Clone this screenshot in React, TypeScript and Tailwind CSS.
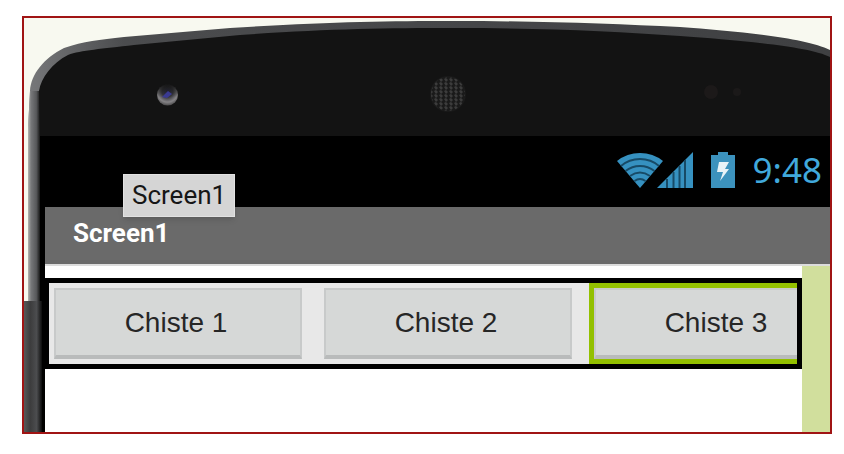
const jokes = ["Chiste 1", "Chiste 2", "Chiste 3"];

function PhoneCase() {
  return (
    <svg
      className="absolute inset-0 h-full w-full"
      viewBox="0 0 806 414"
      preserveAspectRatio="none"
      aria-hidden="true"
    >
      <defs>
        <linearGradient id="rim" x1="0" x2="1" y1="0" y2="0">
          <stop offset="0" stopColor="#77787a" />
          <stop offset="0.12" stopColor="#4b4c4e" />
          <stop offset="1" stopColor="#3f4042" />
        </linearGradient>
        <linearGradient id="side" x1="0" x2="1" y1="0" y2="0">
          <stop offset="0" stopColor="#b5b6b2" />
          <stop offset="0.25" stopColor="#77787a" />
          <stop offset="0.7" stopColor="#57585a" />
          <stop offset="1" stopColor="#161616" />
        </linearGradient>
        <linearGradient id="key" x1="0" x2="1" y1="0" y2="0">
          <stop offset="0" stopColor="#585858" />
          <stop offset="0.35" stopColor="#3c3c3d" />
          <stop offset="0.7" stopColor="#4c4d4f" />
          <stop offset="1" stopColor="#0c0c0c" />
        </linearGradient>
        <radialGradient id="lens" cx="0.5" cy="0.35" r="0.65">
          <stop offset="0" stopColor="#2b2b48" />
          <stop offset="0.4" stopColor="#3a3a40" />
          <stop offset="0.75" stopColor="#858386" />
          <stop offset="1" stopColor="#4c4b4c" />
        </radialGradient>
        <linearGradient id="lensShade" x1="0" x2="0" y1="0" y2="1">
          <stop offset="0" stopColor="#131313" />
          <stop offset="0.6" stopColor="#131313" stopOpacity="0" />
        </linearGradient>
        <pattern id="mesh" width="5" height="4" patternUnits="userSpaceOnUse">
          <path d="M0 1 2 0 4 2 2 4z" fill="#3c3c3c" />
        </pattern>
      </defs>
      <path
        d="M4 414V110L6 73C7 56 20 40 40 30C60 23 75 22 100 19L206 10C300 4 360 3 430 3C520 3 590 6 656 9C710 13 780 19 806 32V414Z"
        fill="url(#rim)"
      />
      <path
        d="M15 414V73C17 60 28 45 44 37C57 32 78 31 110 27L216 17C300 11 360 10 430 10C520 10 590 13 656 18C710 22 785 28 806 39V414Z"
        fill="#131313"
      />
      <path d="M4 110 6 73H15L16 118V414H4Z" fill="url(#side)" />
      <path d="M16 118H806V414H16Z" fill="#000" />
      <path d="M0 283H18V414H0Z" fill="url(#key)" />
      <circle cx="143.500" cy="77" r="10.500" fill="url(#lens)" />
      <circle cx="143.500" cy="77" r="11" fill="url(#lensShade)" />
      <path d="M138 79 144 73 148 76 143 80Z" fill="#3a3a92" />
      <circle cx="424" cy="76" r="18" fill="#1a1a1a" />
      <circle cx="424" cy="76" r="17" fill="url(#mesh)" />
      <circle cx="687" cy="74" r="7" fill="#1c1919" />
      <circle cx="713" cy="74" r="4" fill="#1b1919" />
    </svg>
  );
}

function WifiIcon() {
  return (
    <svg width="46" height="36" viewBox="0 0 46 36" aria-label="Wi-Fi">
      <path d="M0 9Q10 1 23 1Q36 1 46 9L23 36Z" fill="#3691c0" />
      <g fill="none" stroke="#174a66" strokeWidth="2">
        <path d="M4 14Q12 7 23 7Q34 7 42 14" />
        <path d="M8.500 19Q15 14 23 14Q31 14 37.500 19" />
        <path d="M13 24Q18 20.500 23 20.500Q28 20.500 33 24" />
        <path d="M17.500 29Q23 25 28.500 29" />
      </g>
    </svg>
  );
}

function SignalIcon() {
  return (
    <svg width="36" height="36" viewBox="0 0 36 36" aria-label="Signal">
      <path d="M0 36 36 0V36Z" fill="#3691c0" />
      <path
        d="M10 27V36M16.500 20V36M22.500 14V36M28 8V36"
        stroke="#174a66"
        strokeWidth="2"
      />
    </svg>
  );
}

function BatteryIcon() {
  return (
    <svg width="24" height="36" viewBox="0 0 24 36" aria-label="Battery charging">
      <path d="M7 0H17V3H24V36H0V3H7Z" fill="#3c92bd" />
      <path d="M8 10H18L14 17H18L9 29L12 20H6Z" fill="#e8f2f7" />
    </svg>
  );
}

function StatusBar() {
  return (
    <div className="relative flex h-[71px] justify-end pr-2 pt-4">
      <WifiIcon />
      <div className="-ml-[6px]">
        <SignalIcon />
      </div>
      <div className="ml-[18px]">
        <BatteryIcon />
      </div>
      <time className="ml-[18px] font-['Noto_Sans',sans-serif] text-[35px] leading-[36px] text-[#41a9dc]">
        9:48
      </time>
      <div
        role="tooltip"
        className="absolute left-[78px] top-[38px] z-10 border border-[#e2e2e2] bg-[#d5d5d5] px-2 font-['Roboto',sans-serif] text-[26px] leading-[41px] text-[#161616] shadow-md"
      >
        Screen1
      </div>
    </div>
  );
}

export default function App() {
  return (
    <div className="bg-white pb-5 pl-[22px] pr-3 pt-4">
      <main className="relative flex h-[418px] flex-col overflow-hidden border-2 border-[#a01414] bg-[#f8f9f0] pl-[21px] pt-[118px]">
        <PhoneCase />
        <StatusBar />
        <header className="relative h-[57px] bg-[#6a6a6a] pl-7 pt-2">
          <h1 className="font-['Roboto',sans-serif] text-[26px] font-bold leading-[36px] text-white">
            Screen1
          </h1>
        </header>
        <section className="relative flex-1 border-t-2 border-[#dcdcdc] bg-[#d1df9d] pr-7">
          <div className="h-full bg-white pt-3">
            <div className="-ml-px flex gap-3 overflow-hidden border-[5px] border-black bg-[#e8e8e8]">
              {jokes.map((joke) => (
                <div
                  key={joke}
                  className={
                    joke === "Chiste 3"
                      ? "shrink-0 border-[5px] border-[#93c000]"
                      : "shrink-0 border-[5px] border-transparent"
                  }
                >
                  <button
                    type="button"
                    className="block h-[71px] w-[248px] border-2 border-b-4 border-[#c8caca] border-b-[#b9bbbb] bg-[#d6d8d7] pr-1 font-['Liberation_Sans',Arial,sans-serif] text-[28px] leading-[36px] text-[#262626]"
                  >
                    {joke}
                  </button>
                </div>
              ))}
            </div>
          </div>
        </section>
      </main>
    </div>
  );
}
